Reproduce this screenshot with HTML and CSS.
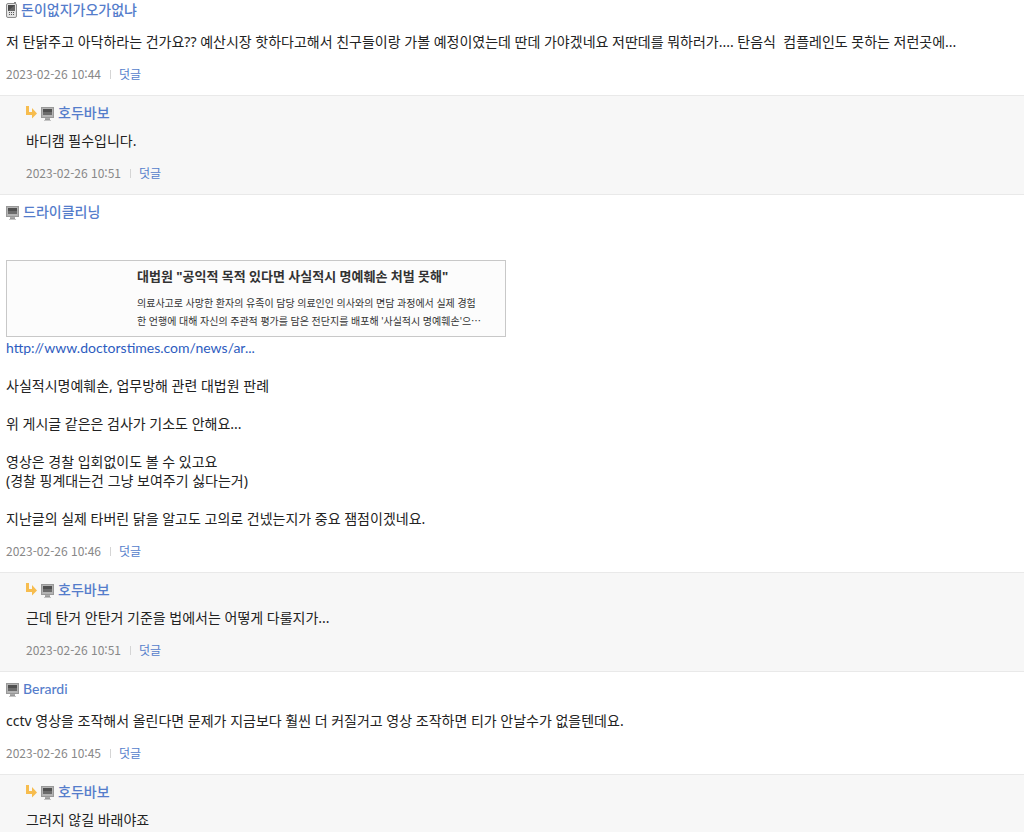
FILE: index.html
```html
<!DOCTYPE html>
<html lang="ko">
<head>
  <meta charset="UTF-8">
  <meta name="viewport" content="width=device-width, initial-scale=1.0">
  <title>덧글</title>
  <link rel="stylesheet" href="styles.css">
</head>
<body>
<svg class="symbols" aria-hidden="true">
  <symbol id="icon-mobile" viewBox="0 0 11 16">
    <path d="M8 0h2v5H8z" fill="#888"/>
    <rect x="0.5" y="1.5" width="10" height="14" rx="1.5" fill="#e2e2e2" stroke="#8c8c8c"/>
    <path d="M2 3h7v6H2z" fill="#4a4a4a"/>
    <path d="M2 9l7-6v6z" fill="#666"/>
    <path d="M3 10h1v1H3zM5 10h1v1H5zM7 10h1v1H7zM3 12h1v1H3zM5 12h1v1H5zM7 12h1v1H7z" fill="#555"/>
  </symbol>
  <symbol id="icon-pc" viewBox="0 0 13 14">
    <path d="M0 0h13v11H0z" fill="#999"/>
    <path d="M1 1h11v9H1z" fill="#b4b4b4"/>
    <path d="M2 2h9v6H2z" fill="#505050"/>
    <path d="M2 5h9v3H2z" fill="#6c6c6c"/>
    <path d="M4 11h5v1H4z" fill="#aaa"/>
    <path d="M4 12h5v1H4z" fill="#999"/>
    <path d="M3 13h7v1H3z" fill="#c4c4c4"/>
  </symbol>
  <symbol id="icon-reply" viewBox="0 0 11 13">
    <path d="M0 0h3v6h3V2l5 5.500L6 12.500V9H0z" fill="#f7bd4f"/>
  </symbol>
</svg>

<div class="comment-list">
  <div class="comment">
    <div class="writer">
      <svg class="icon-mobile" role="img" aria-label="모바일"><use href="#icon-mobile"/></svg>
      <a href="#">돈이없지가오가없냐</a>
    </div>
    <div class="content">저 탄닭주고 아닥하라는 건가요?? 예산시장 핫하다고해서 친구들이랑 가볼 예정이였는데 딴데 가야겠네요 저딴데를 뭐하러가.... 탄음식&nbsp; 컴플레인도 못하는 저런곳에...</div>
    <div class="meta"><span>2023-02-26 10:44</span><a href="#">덧글</a></div>
  </div>

  <div class="comment reply">
    <div class="writer">
      <svg class="icon-reply" aria-hidden="true"><use href="#icon-reply"/></svg>
      <svg class="icon-pc" role="img" aria-label="PC"><use href="#icon-pc"/></svg>
      <a href="#">호두바보</a>
    </div>
    <div class="content">바디캠 필수입니다.</div>
    <div class="meta"><span>2023-02-26 10:51</span><a href="#">덧글</a></div>
  </div>

  <div class="comment">
    <div class="writer">
      <svg class="icon-pc" role="img" aria-label="PC"><use href="#icon-pc"/></svg>
      <a href="#">드라이클리닝</a>
    </div>
    <div class="content">
      <a class="preview" href="#">
        <strong>대법원 "공익적 목적 있다면 사실적시 명예훼손 처벌 못해"</strong>
        <span>의료사고로 사망한 환자의 유족이 담당 의료인인 의사와의 면담 과정에서 실제 경험<br>한 언행에 대해 자신의 주관적 평가를 담은 전단지를 배포해 '사실적시 명예훼손'으⋯</span>
      </a>
      <p><a class="url" href="#">http://www.doctorstimes.com/news/ar...</a></p>
      <p>사실적시명예훼손, 업무방해 관련 대법원 판례</p>
      <p>위 게시글 같은은 검사가 기소도 안해요...</p>
      <p>영상은 경찰 입회없이도 볼 수 있고요<br>(경찰 핑계대는건 그냥 보여주기 싫다는거)</p>
      <p>지난글의 실제 타버린 닭을 알고도 고의로 건넸는지가 중요 잼점이겠네요.</p>
    </div>
    <div class="meta"><span>2023-02-26 10:46</span><a href="#">덧글</a></div>
  </div>

  <div class="comment reply">
    <div class="writer">
      <svg class="icon-reply" aria-hidden="true"><use href="#icon-reply"/></svg>
      <svg class="icon-pc" role="img" aria-label="PC"><use href="#icon-pc"/></svg>
      <a href="#">호두바보</a>
    </div>
    <div class="content">근데 탄거 안탄거 기준을 법에서는 어떻게 다룰지가...</div>
    <div class="meta"><span>2023-02-26 10:51</span><a href="#">덧글</a></div>
  </div>

  <div class="comment">
    <div class="writer">
      <svg class="icon-pc" role="img" aria-label="PC"><use href="#icon-pc"/></svg>
      <a href="#">Berardi</a>
    </div>
    <div class="content">cctv 영상을 조작해서 올린다면 문제가 지금보다 훨씬 더 커질거고 영상 조작하면 티가 안날수가 없을텐데요.</div>
    <div class="meta"><span>2023-02-26 10:45</span><a href="#">덧글</a></div>
  </div>

  <div class="comment reply">
    <div class="writer">
      <svg class="icon-reply" aria-hidden="true"><use href="#icon-reply"/></svg>
      <svg class="icon-pc" role="img" aria-label="PC"><use href="#icon-pc"/></svg>
      <a href="#">호두바보</a>
    </div>
    <div class="content">그러지 않길 바래야죠</div>
  </div>
</div>
</body>
</html>
```
FILE: styles.css
```css
body {
  margin: 0;
  background: #fff;
  color: #222;
  font-family: "Noto Sans", "Noto Sans CJK KR", sans-serif;
  font-size: 14px;
  line-height: 19px;
}
a {
  color: #557dcb;
  text-decoration: none;
}
a:hover {
  text-decoration: underline;
}
p {
  margin: 0 0 19px;
}
p:last-child {
  margin-bottom: 0;
}
.symbols {
  display: none;
}

/* 덧글 */
.comment {
  padding: 7px 6px 13px;
  border-top: 1px solid #e9e9e9;
}
.comment:first-child {
  padding-top: 0;
  border-top: none;
}
.comment:last-child {
  padding-bottom: 3px;
}
.reply {
  padding-left: 26px;
  background: #f7f7f7;
}
.writer {
  display: flex;
  align-items: flex-start;
  gap: 4px;
  height: 20px;
  font-family: Lato, "Noto Sans CJK KR", sans-serif;
  font-weight: 500;
}
.icon-mobile {
  width: 11px;
  height: 16px;
  margin-top: 2px;
}
.icon-pc {
  width: 13px;
  height: 14px;
  margin-top: 4px;
}
.icon-reply {
  width: 11px;
  height: 13px;
  margin-top: 3px;
}
.content {
  margin-top: 12px;
}
.reply .content {
  margin-top: 8px;
}
.meta {
  display: flex;
  align-items: center;
  margin-top: 15px;
  color: #888;
  font-family: "Noto Sans CJK KR", sans-serif;
  font-size: 12px;
  line-height: 16px;
}
.meta a::before {
  content: "";
  display: inline-block;
  width: 1px;
  height: 9px;
  margin: 0 8px 0 9px;
  background: #d5d5d5;
}

/* 링크 미리보기 */
.preview {
  display: block;
  box-sizing: border-box;
  max-width: 500px;
  margin: 38px 0 1px;
  padding: 5px 10px 6px 130px;
  border: 1px solid #c8c8c8;
  background: #fcfcfc;
  color: #333;
}
.preview strong {
  display: block;
  margin-bottom: 8px;
  font-size: 13px;
  line-height: 20px;
}
.preview span {
  display: block;
  font-size: 10px;
  line-height: 18px;
}
.url {
  color: #2d5cc0;
  font-family: Lato, "Noto Sans CJK KR", sans-serif;
}
```
